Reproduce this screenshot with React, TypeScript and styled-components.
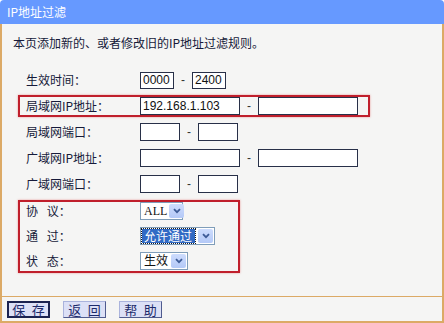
import React from 'react';
import styled, { createGlobalStyle, css } from 'styled-components';

const GlobalStyle = createGlobalStyle`
  html, body {
    margin: 0;
    padding: 0;
    background: #ffffff;
  }
  body {
    font-family: "Noto Sans CJK SC", "Liberation Sans", sans-serif;
    font-size: 12px;
    color: #161a3a;
  }
`;

const Panel = styled.div`
  width: 444px;
  height: 323px;
  display: flex;
  flex-direction: column;
`;

const Header = styled.div`
  height: 24px;
  flex-shrink: 0;
  background: #6699ff;
  border-radius: 4px 4px 0 0;
  color: #ffffff;
  font-size: 12px;
  line-height: 24px;
  padding-left: 7px;
`;

const Body = styled.div`
  flex: 1;
  display: flex;
  flex-direction: column;
  background: #f5f5f4;
  border: 2px solid #dcaa66;
  border-top: none;
`;

const Content = styled.div`
  flex: 1;
  padding: 12px 0 0 11px;
`;

const Intro = styled.div`
  line-height: 14px;
`;

const Form = styled.div`
  margin-top: 17px;
  padding-left: 5px;
`;

const Row = styled.div<{ $highlight?: boolean }>`
  display: flex;
  align-items: center;
  height: 26px;
  padding-left: 8px;
  box-sizing: border-box;
  ${(p) =>
    p.$highlight &&
    css`
      width: 352px;
      height: 22px;
      margin: 2px 0;
      padding-left: 6px;
      border: 2px solid #c01f2c;
      box-shadow: 0 0 2px rgba(225, 90, 90, 0.6);
    `}
`;

const Group = styled.div`
  width: 222px;
  margin-top: 3px;
  border: 2px solid #c01f2c;
  box-shadow: 0 0 2px rgba(225, 90, 90, 0.6);
  box-sizing: border-box;
`;

const GroupRow = styled.div`
  display: flex;
  align-items: flex-start;
  height: 25px;
  padding-left: 6px;
  &:last-child {
    height: 19px;
  }
`;

const Label = styled.span`
  width: 114px;
  flex-shrink: 0;
  line-height: 18px;
  white-space: pre;
`;

const Input = styled.input<{ $w: number; $h?: number }>`
  width: ${(p) => p.$w}px;
  height: ${(p) => p.$h ?? 18}px;
  box-sizing: border-box;
  border: 1px solid #283048;
  background: #ffffff;
  padding: 0 2px;
  margin: 0;
  font-family: "Liberation Sans", sans-serif;
  font-size: 12px;
  color: #111111;
  outline: none;
`;

const Dash = styled.span`
  width: 18px;
  text-align: center;
  font-family: "Liberation Sans", sans-serif;
  font-size: 12px;
  color: #333333;
`;

const SelectBox = styled.div<{ $w: number }>`
  display: flex;
  align-items: center;
  width: ${(p) => p.$w}px;
  height: 18px;
  box-sizing: border-box;
  border: 1px solid #7f9db9;
  background: #ffffff;
  padding: 1px;
`;

const SelectText = styled.span<{ $active?: boolean }>`
  flex: 1;
  font-family: "Liberation Serif", "Noto Sans CJK SC", serif;
  font-size: 12px;
  line-height: 14px;
  padding: 0 2px;
  color: #111111;
  white-space: nowrap;
  ${(p) =>
    p.$active &&
    css`
      font-family: "Noto Sans CJK SC", sans-serif;
      background: #316ac5;
      color: #ffffff;
      outline: 1px dotted #1a1a1a;
      margin-right: 3px;
    `}
`;

const SelectArrow = styled.span`
  width: 15px;
  height: 14px;
  flex-shrink: 0;
  display: flex;
  align-items: center;
  justify-content: center;
  border-radius: 2px;
  background: linear-gradient(#cddcfd, #b4c9f7);
`;

const Footer = styled.div`
  display: flex;
  gap: 13px;
  height: 25px;
  box-sizing: border-box;
  border-top: 1px solid #dcaa66;
  padding: 4px 0 0 5px;
`;

const Button = styled.button<{ $focus?: boolean }>`
  width: 43px;
  height: 17px;
  padding: 0;
  margin: 0;
  box-sizing: border-box;
  background: #dce0f6;
  border: 1px solid;
  border-color: #aab3dc #4f5b8e #4f5b8e #aab3dc;
  font-family: "Noto Sans CJK SC", sans-serif;
  font-size: 13px;
  line-height: 14px;
  color: #1c2a6a;
  white-space: pre;
  ${(p) =>
    p.$focus &&
    css`
      border: 2px solid #1b2350;
    `}
`;

const Chevron = () => (
  <svg width="8" height="6" viewBox="0 0 8 6">
    <path d="M1 1.2 L4 4.2 L7 1.2" fill="none" stroke="#3d5b96" strokeWidth="1.8" />
  </svg>
);

const Select = ({ w, text, active }: { w: number; text: string; active?: boolean }) => (
  <SelectBox $w={w}>
    <SelectText $active={active}>{text}</SelectText>
    <SelectArrow>
      <Chevron />
    </SelectArrow>
  </SelectBox>
);

const App = () => {
  return (
    <>
      <GlobalStyle />
      <Panel>
        <Header>IP地址过滤</Header>
        <Body>
          <Content>
            <Intro>本页添加新的、或者修改旧的IP地址过滤规则。</Intro>
            <Form>
              <Row>
                <Label>生效时间：</Label>
                <Input $w={34} $h={17} readOnly defaultValue="0000" />
                <Dash>-</Dash>
                <Input $w={34} $h={17} readOnly defaultValue="2400" />
              </Row>
              <Row $highlight>
                <Label>局域网IP地址：</Label>
                <Input $w={100} readOnly defaultValue="192.168.1.103" />
                <Dash>-</Dash>
                <Input $w={100} readOnly defaultValue="" />
              </Row>
              <Row>
                <Label>局域网端口：</Label>
                <Input $w={40} readOnly defaultValue="" />
                <Dash>-</Dash>
                <Input $w={40} readOnly defaultValue="" />
              </Row>
              <Row>
                <Label>广域网IP地址：</Label>
                <Input $w={100} readOnly defaultValue="" />
                <Dash>-</Dash>
                <Input $w={100} readOnly defaultValue="" />
              </Row>
              <Row>
                <Label>广域网端口：</Label>
                <Input $w={40} readOnly defaultValue="" />
                <Dash>-</Dash>
                <Input $w={40} readOnly defaultValue="" />
              </Row>
              <Group>
                <GroupRow>
                  <Label>{'协\u2002\u00a0议：'}</Label>
                  <Select w={43} text="ALL" />
                </GroupRow>
                <GroupRow>
                  <Label>{'通\u2002\u00a0过：'}</Label>
                  <Select w={75} text="允许通过" active />
                </GroupRow>
                <GroupRow>
                  <Label>{'状\u2002\u00a0态：'}</Label>
                  <Select w={48} text="生效" />
                </GroupRow>
              </Group>
            </Form>
          </Content>
          <Footer>
            <Button $focus>{'保\u2002存'}</Button>
            <Button>{'返\u2002回'}</Button>
            <Button>{'帮\u2002助'}</Button>
          </Footer>
        </Body>
      </Panel>
    </>
  );
};

export default App;
